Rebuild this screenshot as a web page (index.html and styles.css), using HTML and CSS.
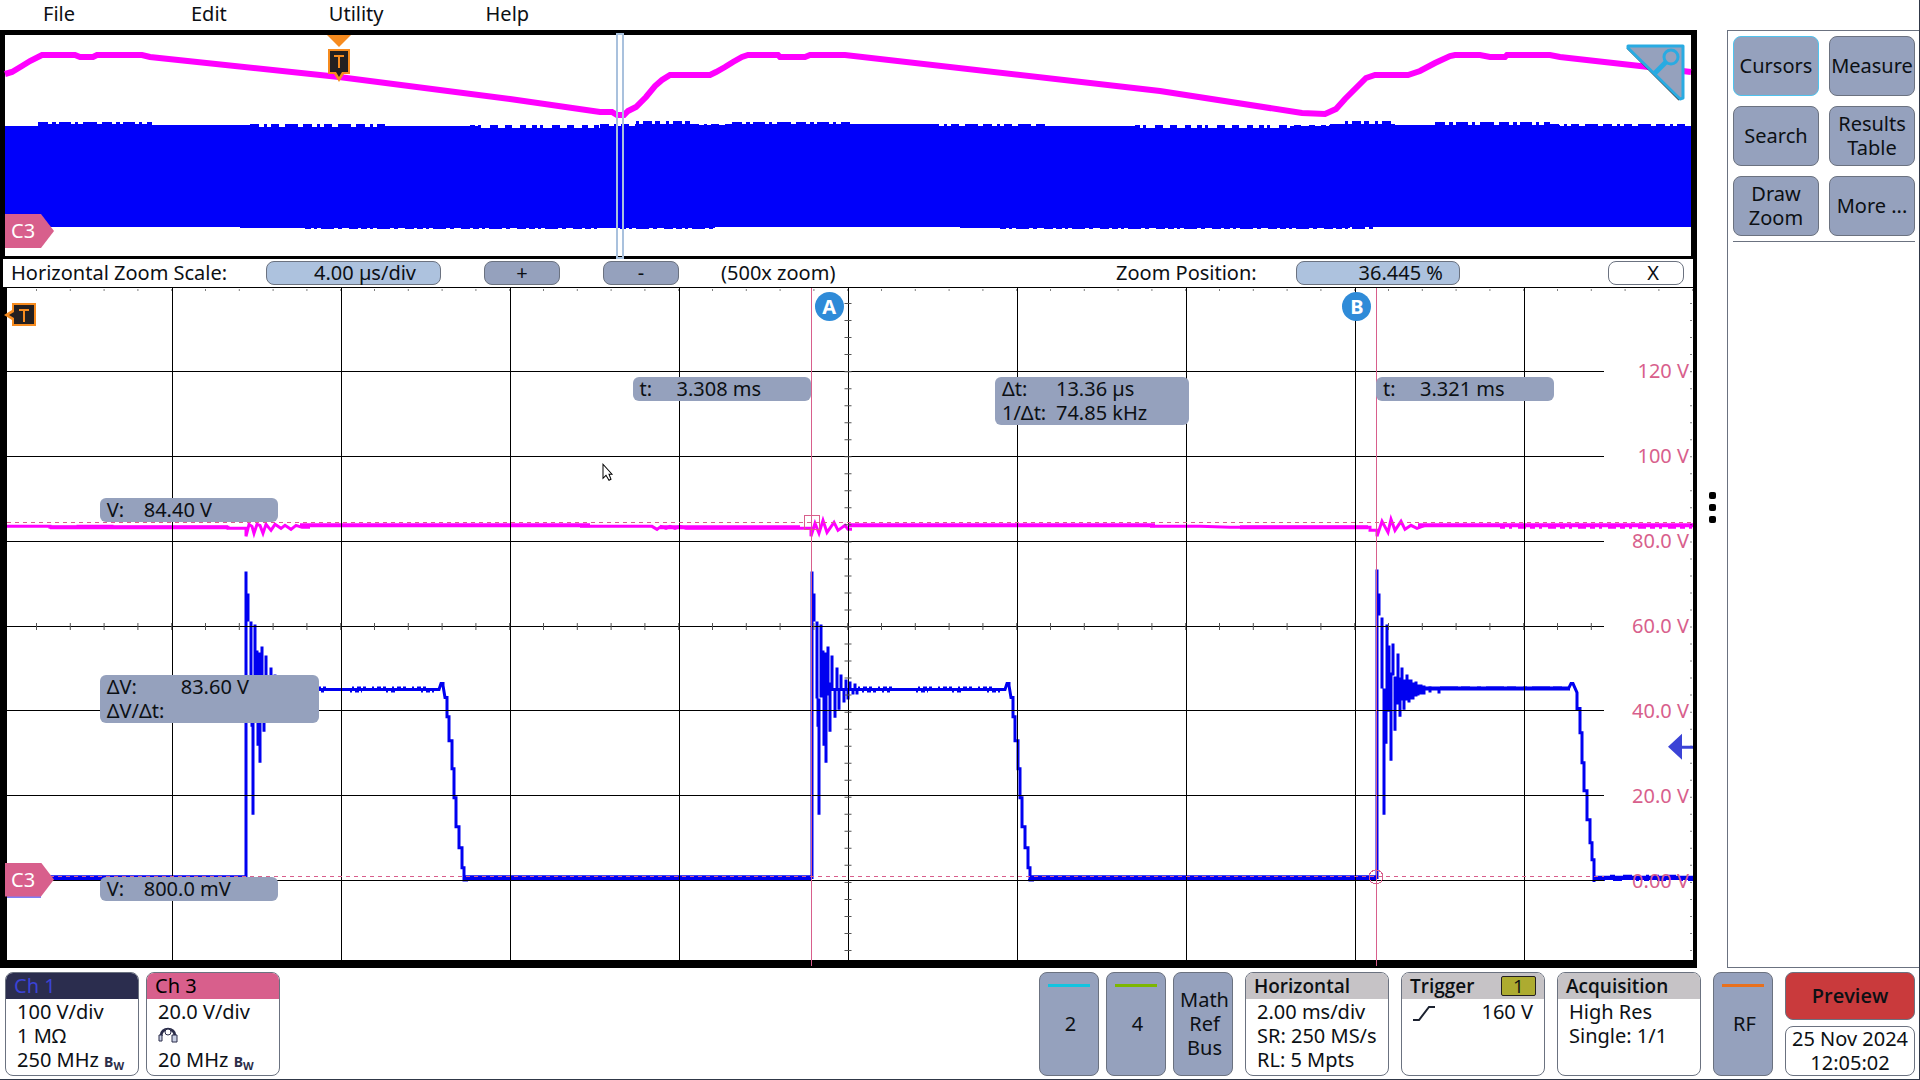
FILE: index.html
```html
<!DOCTYPE html>
<html lang="en">
<head>
<meta charset="utf-8">
<title>Oscilloscope</title>
<link rel="stylesheet" href="styles.css">
</head>
<body>
<div class="app">
  <div class="work">
    <div class="left">
      <nav class="menu">
        <button>File</button><button>Edit</button><button>Utility</button><button>Help</button>
      </nav>
      <main class="scope">
        <section class="overview" aria-label="Overview">
          <svg class="trace" viewBox="5 35 1686 221" preserveAspectRatio="none">
            <!-- envelope of channel 1 -->
            <path class="fill-blue" d="M5 126H38V124H152V125H250V127H385V126H480V128H600V126H636V124H690V125H740V124H930V126H1140V128H1290V126H1330V124H1395V125H1560V126H1691V227H1350V228H960V227H715V228H240V227H5Z"/>
            <g class="fringe">
              <path d="M38 124H152M732 124H850M1435 124H1550" stroke-dasharray="10 4 4 3 12 4 3 5 14 5"/>
              <path d="M636 123H690M1345 123H1392" stroke-dasharray="3 4 9 3 5 6"/>
              <path d="M250 126H385M600 126H640M690 126H735M930 126H1045M1550 126H1691" stroke-dasharray="9 5 3 4 8 6 13 5"/>
              <path d="M470 127H600M1135 127H1335" stroke-dasharray="5 3 3 9 8 7 7 8 6 6"/>
              <path d="M305 227H600M620 227H720M1000 227H1380" stroke-dasharray="6 3 3 4 13 4 4 7 9 3"/>
            </g>
            <path class="mag-wide" d="M5 74L12 72 22 66 30 61 42 55H75L80 57H93L97 55H142L150 57 339 77 510 99 600 112H612L617 115H624L628 111 636 107 646 97 655 86 662 80 670 75H710L716 72 725 67 733 62 742 57 748 55H778L780 57H805L810 55H845L1160 91 1302 113 1325 114 1336 109 1345 99 1366 78 1375 75H1408L1420 71 1435 63 1450 56 1455 55H1480L1490 57H1505L1507 55H1550L1560 57 1640 66 1691 72"/>
            <rect class="window" x="617" y="34" width="6" height="224"/>
          </svg>
          <svg class="trig" width="24" height="48" viewBox="0 0 24 48">
            <path fill="#f68b1f" d="M0 0H24L12 12Z"/>
            <path fill="#f68b1f" d="M1 14H23V39H17L12 47 7 39H1Z"/>
            <path fill="#231f20" d="M3 16H21V37H15L12 42 9 37H3Z"/>
            <path stroke="#f68b1f" stroke-width="2" fill="none" d="M7 21H17M12 21V33"/>
          </svg>
          <div class="tag tag-over">C3</div>
          <svg class="corner" width="59" height="57" viewBox="0 0 59 57">
            <path fill="#95a1bd" stroke="#231f20" stroke-width="4" stroke-linejoin="round" d="M2 3L54 55"/>
            <path fill="#95a1bd" stroke="#29abe2" stroke-width="3" stroke-linejoin="round" d="M2 2H57V54L54 55 2 4Z"/>
            <path stroke="#29abe2" stroke-width="5" d="M40 18L29 29"/>
            <circle cx="45" cy="13" r="7" fill="#95a1bd" stroke="#29abe2" stroke-width="3"/>
          </svg>
        </section>
        <section class="zoombar">
          <span class="zb-scale">Horizontal Zoom Scale:</span>
          <button class="pill pale zb-scaleval">4.00 µs/div</button>
          <button class="pill zb-plus">+</button>
          <button class="pill zb-minus">-</button>
          <span class="zb-note">(500x zoom)</span>
          <span class="zb-pos">Zoom Position:</span>
          <button class="pill pale zb-posval">36.445 %</button>
          <button class="pill blank zb-close">X</button>
        </section>
        <section class="plot" aria-label="Zoomed waveform">
          <svg class="trace" viewBox="7 288 1686 671" preserveAspectRatio="none">
            <!-- channel 3 -->
            <g class="mag">
              <path d="M7 526H50V527H78V526H112V527H228V528H246V536L249 524 252 526 254 533 257 524 260 525 263 533 266 524 271 530 275 524 281 528 285 525 291 529 296 525 302 527H310"/>
              <path d="M580 526H652L657 529 661 526 666 528 670 526 675 528 680 526 686 528H811V536L815 523 819 533 823 520 827 532 834 522 838 530 845 525 848 529H852"/>
              <path d="M1150 526H1200L1230 527H1370V530H1377V536L1382 521 1388 532 1391 519 1395 530 1401 521 1405 529 1411 525 1417 528 1425 525"/>
              <path class="thick" d="M50 527H228M300 525H590M660 527H800M848 525H1155M1240 527H1368M1418 525H1693"/>
              <path d="M1500 527H1693" stroke-dasharray="5 4 3 6 8 4"/>
            </g>
            <!-- channel 1 -->
            <g class="blue">
              <path class="base" d="M50 877H247M465 877H812M1030 877H1377"/>
              <path class="thick" d="M1594 877H1693"/>
              <path class="bump" d="M463 879H530M1028 879H1120M1600 879H1693M1610 875H1690" stroke-dasharray="5 8 9 14 3 5"/>
            </g>
            <defs>
              <g id="pulse">
                <path d="M0 878V571M2 593V621M5 621V698M6 698V726M7 698V814M9 624V697M11 650V697M12 652V745M14 652V762M16 646V695M18 682V731M20 655V689M23 689V717M25 667V690M27 690V709M29 674V690M32 690V702M34 679V690M36 690V699M38 681V690M41 690V694M43 683V690M45 690V694"/>
                <path d="M18 689H193L195 683H197V685L199 697H201V716H203V740H206V768H208V797H210V826H213V847H216V867H218V879H222"/>
                <path class="bump" d="M50 691H78M104 691H116M140 691H150M175 691H188M46 687H84M106 687H180" stroke-dasharray="2 3 4 2 3 6"/>
              </g>
            </defs>
            <use class="blue" href="#pulse" x="246"/>
            <use class="blue" href="#pulse" x="812"/>
            <g class="blue">
              <path d="M1377 878V569M1379 593V615M1382 617V688M1384 688V814M1386 688V743M1387 624V711M1389 645V711M1391 672V760M1393 643V675M1395 676V730M1398 653V704M1400 677V716M1402 667V700M1404 679V709M1407 674V700M1409 679V702M1411 679V699M1413 682V699M1416 681V696M1418 684V695M1421 684V694M1424 685V694M1430 686V692M1439 688V693"/>
              <path class="thick" d="M1396 688H1570"/>
              <path class="bump" d="M1440 687H1570" stroke-dasharray="18 3 9 7 4 5"/>
              <path d="M1568 689L1571 683H1573L1577 692V708H1580V732H1582V762H1584V790H1587V819H1590V842H1592V859H1594V881"/>
            </g>
            <!-- graticule -->
            <path class="grid" d="M7 371H1604M7 456H1604M7 541H1604M7 626H1604M7 710H1604M7 795H1604M7 880H1604M172 288V959M341 288V959M510 288V959M679 288V959M848 288V959M1017 288V959M1186 288V959M1355 288V959M1524 288V959"/>
            <path class="ticks-x" d="M36 626H1604"/>
            <path class="ticks-top" d="M36 290H1693"/>
            <path class="ticks-y" d="M848 303V959"/>
            <path class="edge-y" d="M1691 303V959"/>
            <path class="level" d="M7 522H1693M50 876H1604"/>
            <path class="cursor" d="M811 288V965M1376 288V965"/>
            <path class="cursor" d="M804 515H819V529H804ZM1369 876A7 7 0 0 1 1383 876A7 7 0 0 1 1369 876"/>
            <path class="ground" d="M7 896H41"/>
            <path fill="#3b43d6" d="M1668 746L1682 733V745H1693V748H1682V759Z"/>
            <path fill="#fff" stroke="#000" d="M603 464V478L606 475 609 480 611 479 609 474H612Z"/>
          </svg>
          <svg class="trig-left" width="32" height="24" viewBox="0 0 32 24">
            <path fill="#f68b1f" d="M8 0H32V23H8V17L0 12 8 7Z"/>
            <path fill="#231f20" d="M10 2H30V21H10V15L5 12 10 9Z"/>
            <path stroke="#f68b1f" stroke-width="2" fill="none" d="M15 7H25M20 7V19"/>
          </svg>
          <div class="tag tag-plot">C3</div>
          <div class="knob knob-a">A</div>
          <div class="knob knob-b">B</div>
          <div class="read r-ta"><span>t:</span><span>3.308 ms</span></div>
          <div class="read r-dt"><span>Δt:</span><span>13.36 µs</span><span>1/Δt:</span><span>74.85 kHz</span></div>
          <div class="read r-tb"><span>t:</span><span>3.321 ms</span></div>
          <div class="read r-va"><span>V:</span><span>84.40 V</span></div>
          <div class="read r-dv"><span>ΔV:</span><span>83.60 V</span><span>ΔV/Δt:</span></div>
          <div class="read r-vb"><span>V:</span><span>800.0 mV</span></div>
          <div class="scale">
            <span>120 V</span><span>100 V</span><span>80.0 V</span><span>60.0 V</span><span>40.0 V</span><span>20.0 V</span><span>0.00 V</span>
          </div>
        </section>
      </main>
    </div>
    <div class="grip"><i></i><i></i><i></i></div>
    <aside class="side">
      <div class="tools">
        <button class="active">Cursors</button><button>Measure</button>
        <button>Search</button><button>Results Table</button>
        <button>Draw Zoom</button><button>More ...</button>
      </div>
    </aside>
  </div>
  <footer class="bar">
    <section class="card ch1"><h2>Ch 1</h2><p>100 V/div</p><p>1 MΩ</p><p>250 MHz <b class="bw">B<sub>W</sub></b></p></section>
    <section class="card ch3"><h2>Ch 3</h2><p>20.0 V/div</p>
      <p><svg width="20" height="16" viewBox="0 0 20 16"><path fill="none" stroke="#2b2d4a" stroke-width="3" d="M3 9C3 0 17 0 17 9"/><circle cx="10" cy="5" r="3" fill="#fff" stroke="#2b2d4a"/><path fill="#c9d0e4" stroke="#2b2d4a" d="M1 8H4V14H1ZM14 8H19V15H14Z"/></svg></p>
      <p>20 MHz <b class="bw">B<sub>W</sub></b></p></section>
    <span class="spring"></span>
    <button class="chan cyan">2</button>
    <button class="chan green">4</button>
    <button class="chan stack">Math<br>Ref<br>Bus</button>
    <section class="card info"><h2>Horizontal</h2><p>2.00 ms/div</p><p>SR: 250 MS/s</p><p>RL: 5 Mpts</p></section>
    <section class="card info"><h2>Trigger <span class="src">1</span></h2>
      <p class="split"><svg width="22" height="16" viewBox="0 0 22 16"><path fill="none" stroke="#1c2230" stroke-width="2" d="M0 15H6L16 2H22"/></svg><span>160 V</span></p></section>
    <section class="card info"><h2>Acquisition</h2><p>High Res</p><p>Single: 1/1</p></section>
    <button class="chan orange">RF</button>
    <div class="status">
      <button class="preview">Preview</button>
      <time class="clock">25 Nov 2024<br>12:05:02</time>
    </div>
  </footer>
</div>
</body>
</html>
```
FILE: styles.css
```css
* { box-sizing: border-box; }
body {
  margin: 0;
  background: #fff;
  color: #0c1014;
  font: 20px/24px "Noto Sans", "Liberation Sans", sans-serif;
}
button { font: inherit; color: inherit; padding: 0; border: 0; background: none; }
h2, p { margin: 0; font-size: 20px; }
svg { display: block; }

.app {
  min-height: 100vh;
  display: flex;
  flex-direction: column;
  border-right: 1px solid #303848;
  border-bottom: 1px solid #303848;
}
.work { flex: 1; display: flex; }
.left { flex: 1; display: flex; flex-direction: column; }
.menu { height: 30px; display: flex; align-items: center; gap: 102px; padding: 0 43px 2px; }
.menu button:nth-child(2) { margin-left: 14px; }

.scope {
  flex: 1;
  display: flex;
  flex-direction: column;
  background: #000;
  padding: 5px 4px 8px 3px;
}
.overview { position: relative; height: 221px; background: #fff; margin: 0 2px 3px; }
.trace { position: absolute; inset: 0; width: 100%; height: 100%; overflow: visible; }
.fill-blue { fill: #0000fa; }
.fringe { fill: none; stroke: #0000fa; stroke-width: 4; }
.mag-wide { fill: none; stroke: #ff00ff; stroke-width: 6; }
.window { fill: none; stroke: #a9c1dd; stroke-width: 2; }
.trig { position: absolute; left: calc(19.8% - 12px); top: 0; }
.corner { position: absolute; right: 6px; top: 9px; }

.tag {
  position: absolute;
  left: 0;
  width: 49px;
  height: 34px;
  padding-left: 6px;
  line-height: 34px;
  color: #fff;
  background: #d85f8c;
  clip-path: polygon(0 0, 36px 0, 100% 50%, 36px 100%, 0 100%);
}
.tag-over { top: 179px; }
.tag-plot { top: 85.5%; left: -2px; }

.zoombar {
  display: grid;
  grid-template-columns: 263fr 175fr 43fr 76fr 43fr 76fr 42fr 395fr 180fr 164fr 148fr 76fr 9fr;
  align-items: center;
  height: 29px;
  padding-bottom: 1px;
  border-bottom: 1px solid #000;
  background: #fff;
  white-space: nowrap;
}
.zb-scale { grid-column: 1; padding-left: 8px; }
.zb-scaleval { grid-column: 2; }
.zb-plus { grid-column: 4; }
.zb-minus { grid-column: 6; }
.zb-note { grid-column: 8; }
.zb-pos { grid-column: 9; }
.zb-posval { grid-column: 10; }
.zb-close { grid-column: 12; }
.pill { height: 24px; line-height: 22px; border: 1px solid #6b7280; border-radius: 8px; background: #95a1bd; }
.pale { background: #adc2de; text-align: right; padding-right: 24px; }
.pale.zb-posval { padding-right: 16px; }
.blank { background: #fff; padding-left: 14px; }

.plot { position: relative; flex: 1; background: #fff; margin-left: 4px; }
.mag { fill: none; stroke: #ff00ff; stroke-width: 3; }
.blue { fill: none; stroke: #0000f0; stroke-width: 3; }
.bump { stroke-width: 2; }
.thick { stroke-width: 4; }
.base { stroke-width: 5; }
.grid { fill: none; stroke: #000; shape-rendering: crispEdges; }
.ticks-x { fill: none; stroke: #555; stroke-width: 7; stroke-dasharray: 1 32.8; }
.ticks-top { fill: none; stroke: #000; stroke-width: 1; stroke-dasharray: 1 32.8; }
.ticks-y { fill: none; stroke: #555; stroke-width: 7; stroke-dasharray: 1 16; }
.edge-y { fill: none; stroke: #000; stroke-width: 1; stroke-dasharray: 1 16; }
.level { fill: none; stroke: #d85f8c; stroke-dasharray: 4 4; shape-rendering: crispEdges; }
.cursor { fill: none; stroke: #d85f8c; shape-rendering: crispEdges; }
.ground { stroke: #0000f0; }
.trig-left { position: absolute; left: -3px; top: 15px; }

.knob {
  position: absolute;
  top: 4px;
  width: 29px;
  height: 29px;
  border-radius: 50%;
  background: #2f8bd8;
  color: #fff;
  font-weight: 700;
  line-height: 29px;
  text-align: center;
}
.knob-a { left: 47.9%; }
.knob-b { left: 79.2%; }

.read {
  position: absolute;
  display: grid;
  grid-template-columns: 37px 1fr;
  align-content: start;
  width: 178px;
  padding-left: 7px;
  border-radius: 6px;
  background: #95a1bd;
  white-space: nowrap;
}
.r-ta { left: 37.1%; top: 13.3%; }
.r-dt { left: 58.6%; top: 13.3%; width: 194px; grid-template-columns: 54px 1fr; }
.r-tb { left: 81.2%; top: 13.3%; }
.r-va { left: 5.5%; top: 31.3%; }
.r-dv { left: 5.5%; top: 57.6%; width: 219px; grid-template-columns: 74px 1fr; }
.r-vb { left: 5.5%; top: 87.7%; }

.scale {
  position: absolute;
  right: 4px;
  top: 10.6%;
  bottom: 10%;
  display: flex;
  flex-direction: column;
  justify-content: space-between;
  text-align: right;
  color: #d85f8c;
}

.grip { width: 30px; display: flex; flex-direction: column; align-items: center; gap: 5px; padding-top: 492px; }
.grip i { width: 7px; height: 7px; border-radius: 2px; background: #000; }

.side { width: 192px; margin-top: 30px; border: 1px solid #6b7280; border-right: 0; padding: 5px; padding-right: 4px; }
.tools { display: grid; grid-template-columns: 1fr 1fr; gap: 10px; padding-bottom: 5px; border-bottom: 1px solid #6b7280; }
.tools button { height: 60px; border: 1px solid #6b7280; border-radius: 8px; background: #95a1bd; }
.tools .active { border-color: #4fc3ee; }

.bar { display: flex; gap: 7px; height: 111px; padding: 4px 4px 3px 5px; }
.spring { flex: 1; }
.card { width: 134px; border: 1px solid #6b7280; border-radius: 8px; overflow: hidden; white-space: nowrap; }
.card h2 { height: 26px; padding: 0 8px; font-weight: 400; line-height: 26px; margin-bottom: 1px; }
.card p { height: 24px; padding: 0 11px; }
.card p svg { padding-top: 2px; height: 20px; }
.ch1 h2 { background: #2b2d4e; color: #3b43d6; }
.ch3 h2 { background: #d85f8c; color: #000; }
.info { width: 144px; margin-left: 5px; }
.info h2 { background: #c6c3c6; font-family: "Open Sans", sans-serif; font-weight: 600; font-size: 19px; }
.bw { font-size: 14px; line-height: 14px; color: #2b2d4a; }
.bw sub { font-size: 11px; line-height: 11px; vertical-align: -3px; }
.src { float: right; width: 35px; height: 20px; margin-top: 3px; border: 1px solid #231f20; border-radius: 2px; background: #adab30; line-height: 18px; text-align: center; font-weight: 400; }
.card .split { display: flex; justify-content: space-between; align-items: center; }
.chan { position: relative; width: 60px; padding-left: 3px; border: 1px solid #6b7280; border-radius: 8px; background: #95a1bd; }
.chan::before { content: ""; position: absolute; left: 8px; right: 8px; top: 11px; height: 3px; }
.cyan::before { background: #12c4e0; }
.green::before { background: #7db700; }
.orange { margin-left: 5px; }
.orange::before { background: #e8701c; }
.status { width: 130px; margin-left: 5px; display: flex; flex-direction: column; gap: 6px; }
.preview { flex: 1; border: 1px solid #6b7280; border-radius: 8px; background: #c93a3c; font-family: "Open Sans", sans-serif; font-weight: 600; }
.clock { flex: 1; border: 1px solid #6b7280; border-radius: 8px; text-align: center; white-space: nowrap; }
```
